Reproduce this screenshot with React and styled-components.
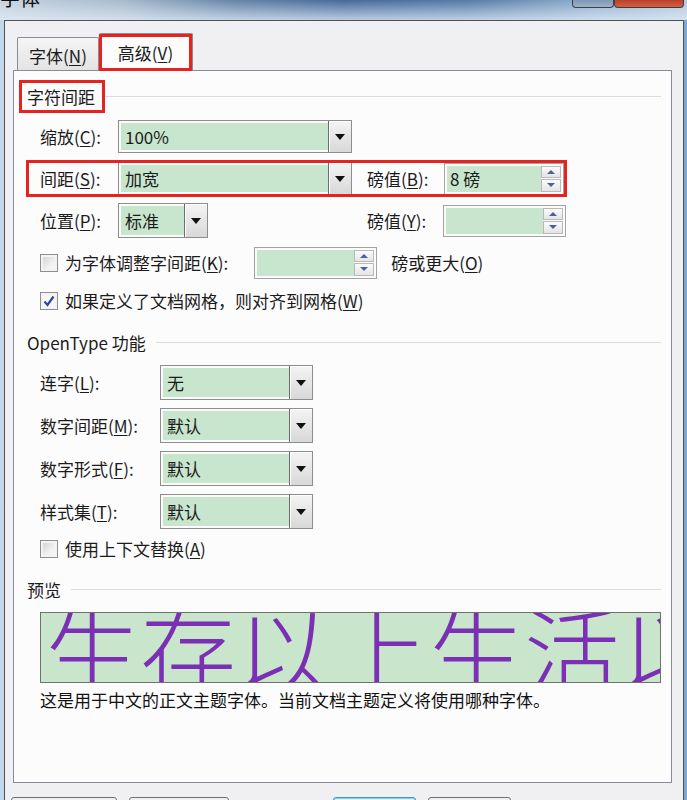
import React from "react";
import styled, { createGlobalStyle, css } from "styled-components";

const GlobalStyle = createGlobalStyle`
  html, body {
    margin: 0;
    padding: 0;
    background: #ffffff;
  }
  body {
    font-family: "Noto Sans CJK SC", "Noto Sans", sans-serif;
  }
`;

// red annotation box drawn over an element
const marked = css`
  ${(p) =>
    p.$marked &&
    css`
      &::after {
        content: "";
        position: absolute;
        inset: 0;
        border: 3px solid #e8231f;
        pointer-events: none;
      }
    `}
`;

export default function App() {
  return (
    <>
      <GlobalStyle />
      <Window>
        <TitleBar>
          <TitleText>字体</TitleText>
          <Controls>
            <CtrlButton $w={42} $bg="linear-gradient(#7f97b3, #9db2c8)" />
            <CtrlButton $w={70} $bg="linear-gradient(#b8402c, #d5603f)" />
          </Controls>
        </TitleBar>

        <Dialog>
          <TabStrip>
            <Tab $w={82}>
              字体(<Key>N</Key>)
            </Tab>
            <Tab $w={94} $active $marked>
              高级(<Key>V</Key>)
            </Tab>
          </TabStrip>

          <Panel>
            <HeadRow>
              <HeadText $marked>字符间距</HeadText>
              <HeadLine />
            </HeadRow>

            <Row $mt={5}>
              <Label $w={78}>
                缩放(<Key>C</Key>):
              </Label>
              <Combo $w={234}>
                <ComboText>100%</ComboText>
                <DropButton />
              </Combo>
            </Row>

            <Row $mt={5} $marked>
              <Label $w={78}>
                间距(<Key>S</Key>):
              </Label>
              <Combo $w={234}>
                <ComboText>加宽</ComboText>
                <DropButton />
              </Combo>
              <Label $w={77} $ml={15}>
                磅值(<Key>B</Key>):
              </Label>
              <Spin $w={120}>
                <SpinText>8 磅</SpinText>
                <SpinButtons>
                  <SpinBtn $up />
                  <SpinBtn />
                </SpinButtons>
              </Spin>
            </Row>

            <Row $mt={5}>
              <Label $w={78}>
                位置(<Key>P</Key>):
              </Label>
              <Combo $w={90} $h={35}>
                <ComboText>标准</ComboText>
                <DropButton />
              </Combo>
              <Label $w={76} $ml={159}>
                磅值(<Key>Y</Key>):
              </Label>
              <Spin $w={123}>
                <SpinText />
                <SpinButtons>
                  <SpinBtn $up />
                  <SpinBtn />
                </SpinButtons>
              </Spin>
            </Row>

            <Row $mt={5}>
              <CheckBox />
              <Label>
                为字体调整字间距(<Key>K</Key>):
              </Label>
              <Spin $w={123} $ml={26}>
                <SpinText />
                <SpinButtons>
                  <SpinBtn $up />
                  <SpinBtn />
                </SpinButtons>
              </Spin>
              <Label $ml={14}>
                磅或更大(<Key>O</Key>)
              </Label>
            </Row>

            <Row $mt={5} $h={30}>
              <CheckBox $checked>
                <svg width="14" height="14" viewBox="0 0 14 14">
                  <path
                    d="M2.5 7.5 L5.5 11 L11.5 2.5"
                    fill="none"
                    stroke="#2b4a9f"
                    strokeWidth="2.2"
                  />
                </svg>
              </CheckBox>
              <Label>
                如果定义了文档网格，则对齐到网格(<Key>W</Key>)
              </Label>
            </Row>

            <HeadRow $mt={10}>
              <HeadText>OpenType 功能</HeadText>
              <HeadLine />
            </HeadRow>

            <Row $mt={5}>
              <Label $w={120}>
                连字(<Key>L</Key>):
              </Label>
              <Combo $w={153} $h={35}>
                <ComboText>无</ComboText>
                <DropButton />
              </Combo>
            </Row>
            <Row $mt={6}>
              <Label $w={120}>
                数字间距(<Key>M</Key>):
              </Label>
              <Combo $w={153} $h={35}>
                <ComboText>默认</ComboText>
                <DropButton />
              </Combo>
            </Row>
            <Row $mt={6}>
              <Label $w={120}>
                数字形式(<Key>F</Key>):
              </Label>
              <Combo $w={153} $h={35}>
                <ComboText>默认</ComboText>
                <DropButton />
              </Combo>
            </Row>
            <Row $mt={6}>
              <Label $w={120}>
                样式集(<Key>T</Key>):
              </Label>
              <Combo $w={153} $h={35}>
                <ComboText>默认</ComboText>
                <DropButton />
              </Combo>
            </Row>

            <Row $mt={4} $h={30}>
              <CheckBox />
              <Label>
                使用上下文替换(<Key>A</Key>)
              </Label>
            </Row>

            <HeadRow $mt={9}>
              <HeadText>预览</HeadText>
              <HeadLine />
            </HeadRow>

            <PreviewBox>
              <PreviewText>生存以上生活以</PreviewText>
            </PreviewBox>
            <Caption>
              这是用于中文的正文主题字体。当前文档主题定义将使用哪种字体。
            </Caption>
          </Panel>

          <ButtonRow>
            <DlgButton $w={106} $ml={-2} />
            <DlgButton $w={100} $ml={12} />
            <DlgButton $w={83} $ml={104} $focus />
            <DlgButton $w={83} $ml={12} />
          </ButtonRow>
        </Dialog>
      </Window>
    </>
  );
}

const Window = styled.div`
  width: 687px;
  height: 800px;
  overflow: hidden;
  display: flex;
  flex-direction: column;
  background: linear-gradient(to right, #c3d7eb 0%, #a7c3e0 50%, #7ea7d4 100%);
`;

const TitleBar = styled.div`
  height: 20px;
  flex: none;
  display: flex;
  justify-content: space-between;
  align-items: flex-start;
  background: linear-gradient(
      to bottom,
      rgba(255, 255, 255, 0) 0%,
      rgba(225, 236, 247, 0.75) 100%
    ),
    linear-gradient(
      to right,
      #c6d3df 0%,
      #a7b9cb 18%,
      #6584a8 34%,
      #46699a 50%,
      #557aa6 68%,
      #8fadcd 86%,
      #b3c9df 100%
    );
`;

const TitleText = styled.div`
  margin-top: -12px;
  font-size: 20px;
  line-height: 20px;
  color: #111;
`;

const Controls = styled.div`
  display: flex;
  margin-right: 3px;
`;

const CtrlButton = styled.div`
  width: ${(p) => p.$w}px;
  height: 8px;
  box-sizing: border-box;
  background: ${(p) => p.$bg};
  border: 1px solid #3b3f47;
  border-top: none;
  border-radius: 0 0 4px 4px;
`;

const Dialog = styled.div`
  flex: 1;
  margin: 0 3px 0 4px;
  border: 1px solid #4f5257;
  border-bottom: none;
  background: #f0eff1;
  padding: 12px 11px 0 8px;
  display: flex;
  flex-direction: column;
`;

const TabStrip = styled.div`
  display: flex;
  align-items: flex-end;
  height: 37px;
  padding-left: 4px;
`;

const Tab = styled.div`
  position: relative;
  box-sizing: border-box;
  width: ${(p) => p.$w}px;
  height: ${(p) => (p.$active ? 38 : 33)}px;
  margin-bottom: ${(p) => (p.$active ? -1 : 0)}px;
  z-index: ${(p) => (p.$active ? 2 : 1)};
  border: 1px solid #898c95;
  border-bottom: none;
  border-left: ${(p) => (p.$active ? "none" : "1px solid #898c95")};
  border-radius: 2px 2px 0 0;
  background: ${(p) =>
    p.$active ? "#fdfcfd" : "linear-gradient(#f5f5f5, #e3e3e3)"};
  display: flex;
  align-items: center;
  justify-content: center;
  padding-top: ${(p) => (p.$active ? 0 : 2)}px;
  font-size: 17px;
  color: #1b1b1b;
  ${marked}
`;

const Key = styled.u`
  text-decoration-thickness: 1px;
  text-underline-offset: 2px;
`;

const Panel = styled.div`
  position: relative;
  box-sizing: border-box;
  height: 713px;
  flex: none;
  border: 1px solid #898c95;
  background: #fdfcfd;
  padding: 9px 10px 0 5px;
  display: flex;
  flex-direction: column;
`;

const HeadRow = styled.div`
  display: flex;
  align-items: center;
  margin-top: ${(p) => p.$mt || 0}px;
`;

const HeadText = styled.div`
  position: relative;
  height: 33px;
  line-height: 33px;
  padding: 0 10px 0 8px;
  font-size: 17px;
  color: #1b1b1b;
  white-space: nowrap;
  ${marked}
`;

const HeadLine = styled.div`
  flex: 1;
  height: 1px;
  background: #dcdcde;
`;

const Row = styled.div`
  position: relative;
  box-sizing: border-box;
  display: flex;
  align-items: center;
  width: 541px;
  height: ${(p) => p.$h || 37}px;
  margin: ${(p) => p.$mt || 0}px 0 0 7px;
  padding-left: 14px;
  ${marked}
`;

const Label = styled.span`
  flex: none;
  width: ${(p) => (p.$w ? `${p.$w}px` : "auto")};
  margin-left: ${(p) => p.$ml || 0}px;
  font-size: 17px;
  line-height: 22px;
  color: #1b1b1b;
  white-space: nowrap;
`;

const Combo = styled.div`
  flex: none;
  display: flex;
  box-sizing: border-box;
  width: ${(p) => p.$w}px;
  height: ${(p) => p.$h || 33}px;
  border: 1px solid #8d8d8d;
  background: #c8e6cd;
  box-shadow: inset 0 0 0 2px #fbfbfb;
`;

const ComboText = styled.div`
  flex: 1;
  padding-left: 6px;
  display: flex;
  align-items: center;
  font-size: 17px;
  color: #1b1b1b;
`;

const DropButton = styled.div`
  width: 23px;
  box-sizing: border-box;
  border-left: 1px solid #6c6c6c;
  background: linear-gradient(#f4f4f4, #d8d8d8);
  box-shadow: inset 1px 1px 0 #ffffff;
  display: flex;
  align-items: center;
  justify-content: center;
  &::before {
    content: "";
    border-left: 5px solid transparent;
    border-right: 5px solid transparent;
    border-top: 6px solid #111;
  }
`;

const Spin = styled.div`
  flex: none;
  display: flex;
  box-sizing: border-box;
  width: ${(p) => p.$w}px;
  height: 32px;
  margin-left: ${(p) => p.$ml || 0}px;
  border: 1px solid #a3a3a3;
  background: #c8e6cd;
  box-shadow: inset 0 0 0 2px #fbfbfb;
`;

const SpinText = styled.div`
  flex: 1;
  padding-left: 5px;
  display: flex;
  align-items: center;
  font-size: 17px;
  color: #1b1b1b;
`;

const SpinButtons = styled.div`
  width: 20px;
  margin: 2px 2px 2px 0;
  display: flex;
  flex-direction: column;
  gap: 1px;
  background: #fbfbfb;
`;

const SpinBtn = styled.div`
  flex: 1;
  box-sizing: border-box;
  border: 1px solid #b9b9b9;
  background: linear-gradient(#fbfbfb, #e4e4e6);
  display: flex;
  align-items: center;
  justify-content: center;
  &::before {
    content: "";
    border-left: 4px solid transparent;
    border-right: 4px solid transparent;
    ${(p) =>
      p.$up
        ? "border-bottom: 4px solid #4c5ea6;"
        : "border-top: 4px solid #4c5ea6;"}
  }
`;

const CheckBox = styled.span`
  flex: none;
  box-sizing: border-box;
  width: 18px;
  height: 18px;
  margin-right: 7px;
  border: 1px solid #8e8f8f;
  background: ${(p) =>
    p.$checked
      ? "#f6f6f6"
      : "linear-gradient(135deg, #cfcfcf 0%, #f0f0f0 60%, #fafafa 100%)"};
  box-shadow: inset 0 0 0 2px #f3f3f3;
  display: flex;
  align-items: center;
  justify-content: center;
`;

const PreviewBox = styled.div`
  flex: none;
  box-sizing: border-box;
  width: 621px;
  height: 71px;
  margin: 6px 0 0 21px;
  padding-left: 3px;
  border: 1px solid #6f7370;
  background: #c9e6cd;
  overflow: hidden;
  display: flex;
  align-items: center;
`;

const PreviewText = styled.span`
  white-space: nowrap;
  font-family: "Noto Sans CJK SC", sans-serif;
  font-weight: 300;
  font-size: 96px;
  line-height: 96px;
  letter-spacing: 0;
  color: #7b2fb5;
`;

const Caption = styled.div`
  margin: 7px 0 0 21px;
  font-size: 17px;
  line-height: 20px;
  color: #111;
`;

const ButtonRow = styled.div`
  display: flex;
  margin-top: 14px;
`;

const DlgButton = styled.div`
  flex: none;
  box-sizing: border-box;
  width: ${(p) => p.$w}px;
  height: 26px;
  margin-left: ${(p) => p.$ml}px;
  border: 1px solid ${(p) => (p.$focus ? "#3c97d2" : "#707070")};
  border-radius: 3px;
  background: linear-gradient(#f2f2f2, #dddddd);
  box-shadow: ${(p) => (p.$focus ? "inset 0 0 0 1px #7fd0f5" : "none")};
`;
